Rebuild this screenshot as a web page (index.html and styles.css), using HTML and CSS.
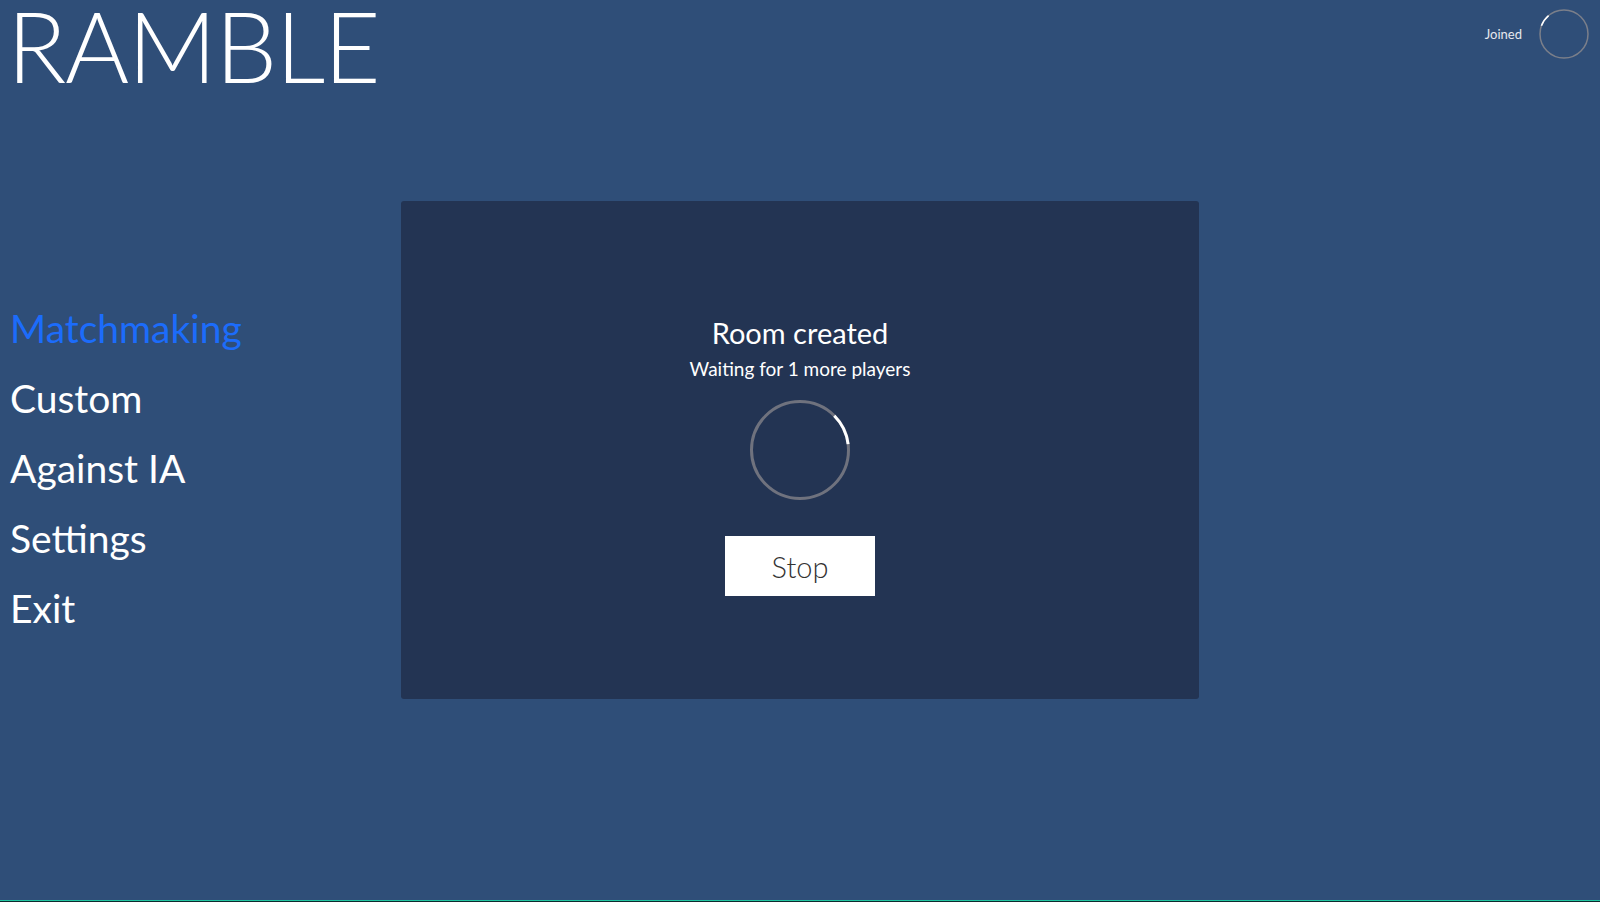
FILE: index.html
```html
<!DOCTYPE html>
<html lang="en">
<head>
<meta charset="utf-8">
<title>Ramble</title>
<link rel="stylesheet" href="styles.css">
</head>
<body>
<div class="app">
  <header class="header">
    <h1 class="title">RAMBLE</h1>
    <div class="status">
      <span class="status-label">Joined</span>
      <svg class="status-ring" width="50" height="50" viewBox="0 0 50 50">
        <circle cx="25" cy="25" r="24" fill="none" stroke="#7b7f8a" stroke-width="1.5"/>
        <path d="M2.45 16.8 A24 24 0 0 1 9.6 6.6" fill="none" stroke="#ffffff" stroke-width="1.5"/>
      </svg>
    </div>
  </header>
  <main class="main">
    <nav class="menu">
      <div class="menu-item active">Matchmaking</div>
      <div class="menu-item">Custom</div>
      <div class="menu-item">Against IA</div>
      <div class="menu-item">Settings</div>
      <div class="menu-item">Exit</div>
    </nav>
    <section class="panel">
      <div class="panel-title">Room created</div>
      <div class="panel-sub">Waiting for 1 more players</div>
      <svg class="spinner" width="100" height="100" viewBox="0 0 100 100">
        <circle cx="50" cy="50" r="48.5" fill="none" stroke="#6f727e" stroke-width="3"/>
        <path d="M84.3 15.7 A48.5 48.5 0 0 1 98.1 44.1" fill="none" stroke="#ffffff" stroke-width="3"/>
      </svg>
      <button class="stop-btn">Stop</button>
    </section>
  </main>
  <div class="footer-strip"></div>
</div>
</body>
</html>
```
FILE: styles.css
```css
* { box-sizing: border-box; }
html, body {
  margin: 0;
  padding: 0;
}
body {
  background: #2f4e78;
  font-family: Lato, "Open Sans", sans-serif;
  color: #ffffff;
}
.app {
  width: 1600px;
  height: 902px;
  display: flex;
  flex-direction: column;
  overflow: hidden;
}
.header {
  height: 201px;
  display: flex;
  justify-content: space-between;
  align-items: flex-start;
  padding: 0 11px 0 7px;
}
.title {
  margin: 0;
  font-size: 98px;
  font-weight: 300;
  line-height: 90px;
  letter-spacing: -1.5px;
  color: #ffffff;
}
.status {
  display: flex;
  align-items: center;
  gap: 17px;
  padding-top: 9px;
}
.status-label {
  font-size: 13px;
  color: #e6e8ee;
}
.status-ring { display: block; }
.main {
  flex: 1;
  display: flex;
}
.menu {
  width: 401px;
  padding: 92px 0 0 10px;
  display: flex;
  flex-direction: column;
}
.menu-item {
  font-size: 39px;
  line-height: 70px;
  height: 70px;
  color: #ffffff;
}
.menu-item.active {
  color: #1c6cfb;
}
.panel {
  width: 798px;
  height: 498px;
  background: #233453;
  border-radius: 3px;
  display: flex;
  flex-direction: column;
  align-items: center;
  padding-top: 112px;
}
.panel-title {
  font-size: 29px;
  line-height: 40px;
}
.panel-sub {
  font-size: 19px;
  line-height: 24px;
  margin-top: 4px;
}
.spinner {
  display: block;
  margin-top: 19px;
}
.stop-btn {
  margin-top: 36px;
  width: 150px;
  height: 60px;
  border: none;
  border-radius: 0;
  background: #ffffff;
  color: #333333;
  font-family: Lato, "Open Sans", sans-serif;
  font-size: 29px;
  font-weight: 300;
  display: flex;
  align-items: center;
  justify-content: center;
  padding: 0;
}
.footer-strip {
  height: 2px;
  border-top: 1px solid #22c6a2;
  background: #0d2b2e;
}
```
